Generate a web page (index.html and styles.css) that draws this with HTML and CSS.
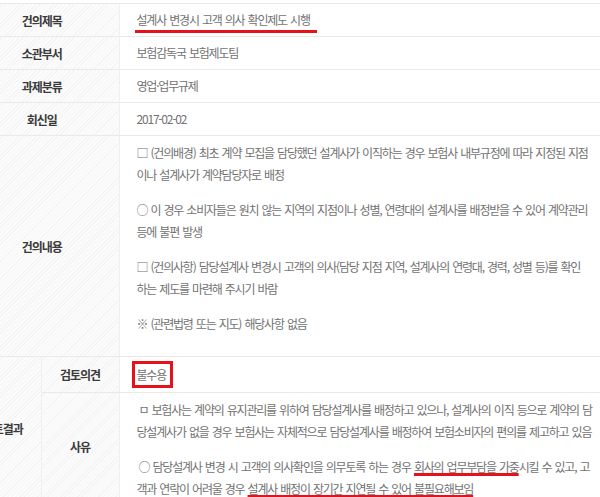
FILE: index.html
```html
<!DOCTYPE html>
<html lang="ko">
<head>
<meta charset="UTF-8" />
<meta name="viewport" content="width=device-width, initial-scale=1" />
<title>건의 상세</title>
<link rel="stylesheet" href="styles.css">
</head>
<body>
  <table class="view-table">
    <colgroup>
      <col class="col-group">
      <col class="col-label">
      <col class="col-body">
    </colgroup>
    <tr class="row-short">
      <th colspan="2">건의제목</th>
      <td><span class="mark-line">설계사 변경시 고객 의사 확인제도 시행</span></td>
    </tr>
    <tr class="row-short">
      <th colspan="2">소관부서</th>
      <td>보험감독국 보험제도팀</td>
    </tr>
    <tr class="row-short">
      <th colspan="2">과제분류</th>
      <td>영업·업무규제</td>
    </tr>
    <tr class="row-short">
      <th colspan="2">회신일</th>
      <td>2017-02-02</td>
    </tr>
    <tr>
      <th colspan="2">건의내용</th>
      <td class="content content-long">
        <p>□ (건의배경) 최초 계약 모집을 담당했던 설계사가 이직하는 경우 보험사 내부규정에 따라 지정된 지점<br>이나 설계사가 계약담당자로 배정</p>
        <p>○ 이 경우 소비자들은 원치 않는 지역의 지점이나 성별, 연령대의 설계사를 배정받을 수 있어 계약관리<br>등에 불편 발생</p>
        <p>□ (건의사항) 담당설계사 변경시 고객의 의사(담당 지점 지역, 설계사의 연령대, 경력, 성별 등)를 확인<br>하는 제도를 마련해 주시기 바람</p>
        <p>※ (관련법령 또는 지도) 해당사항 없음</p>
      </td>
    </tr>
    <tr class="row-opinion">
      <th rowspan="2" class="group">검토결과</th>
      <th class="sub">검토의견</th>
      <td><span class="mark-box">불수용</span></td>
    </tr>
    <tr>
      <th class="sub">사유</th>
      <td class="content">
        <p class="indent">ㅁ 보험사는 계약의 유지관리를 위하여 담당설계사를 배정하고 있으나, 설계사의 이직 등으로 계약의 담<br>당설계사가 없을 경우 보험사는 자체적으로 담당설계사를 배정하여 보험소비자의 편의를 제고하고 있음</p>
        <p class="indent">○ 담당설계사 변경 시 고객의 의사확인을 의무토록 하는 경우 <span class="mark-under">회사의 업무부담을 가중</span>시킬 수 있고, 고<br>객과 연락이 어려울 경우 <span class="mark-under">설계사 배정이 장기간 지연될 수 있어 불필요해보임</span></p>
      </td>
    </tr>
  </table>
</body>
</html>
```

FILE: styles.css
```css
:root {
  --line-color: #e9e9e9;
  --label-color: #3a3a3a;
  --text-color: #727272;
  --mark-color: #e5121b;
  --font-family: "Noto Sans CJK KR", "Noto Sans", sans-serif;
}
* {
  box-sizing: border-box;
}
html, body {
  margin: 0;
  padding: 0;
  background: #fff;
  overflow: hidden;
}
body {
  font-family: var(--font-family);
  font-size: 12px;
  letter-spacing: -1.2px;
  word-spacing: 1px;
  color: var(--text-color);
  padding-top: 3px;
}
.view-table {
  width: 660px;
  margin-left: -35px;
  border-collapse: collapse;
  table-layout: fixed;
  border-top: 1px solid var(--line-color);
}
.col-group {
  width: 76px;
}
.col-label {
  width: 78px;
}
.view-table th,
.view-table td {
  border-bottom: 1px solid var(--line-color);
  padding: 0;
  vertical-align: middle;
}
.view-table th {
  background: repeating-linear-gradient(135deg, #fcfcfc 0 2px, #f3f3f3 2px 3px);
  color: var(--label-color);
  font-weight: 700;
  letter-spacing: -1px;
  text-align: center;
  border-right: 1px solid #efefef;
}
.view-table td {
  padding: 0 0 0 17px;
  line-height: 22px;
}
.row-short th,
.row-short td {
  height: 33px;
}
.row-opinion th,
.row-opinion td {
  height: 36px;
}
.view-table th.group {
  border-bottom: none;
}
.content {
  padding-top: 6px !important;
  padding-bottom: 0 !important;
}
.content p {
  margin: 0 0 13px 0;
  white-space: nowrap;
}
.content p:last-child {
  margin-bottom: 0;
}
.content p.indent::first-line {
  word-spacing: 1px;
}
.content p.indent {
  text-indent: 2px;
}
.content-long {
  padding-bottom: 21px !important;
}
/* red marks drawn over the capture */
.mark-line {
  padding: 0 7px 2px 2px;
  margin-left: -2px;
  border-bottom: 3px solid var(--mark-color);
}
.mark-box {
  display: inline-block;
  margin-left: -5px;
  padding: 0 4px 0 2px;
  line-height: 21px;
  border: 3px solid var(--mark-color);
}
.mark-under {
  text-decoration: underline var(--mark-color) 3px;
  text-decoration-skip-ink: none;
  text-underline-offset: 1px;
}
```
